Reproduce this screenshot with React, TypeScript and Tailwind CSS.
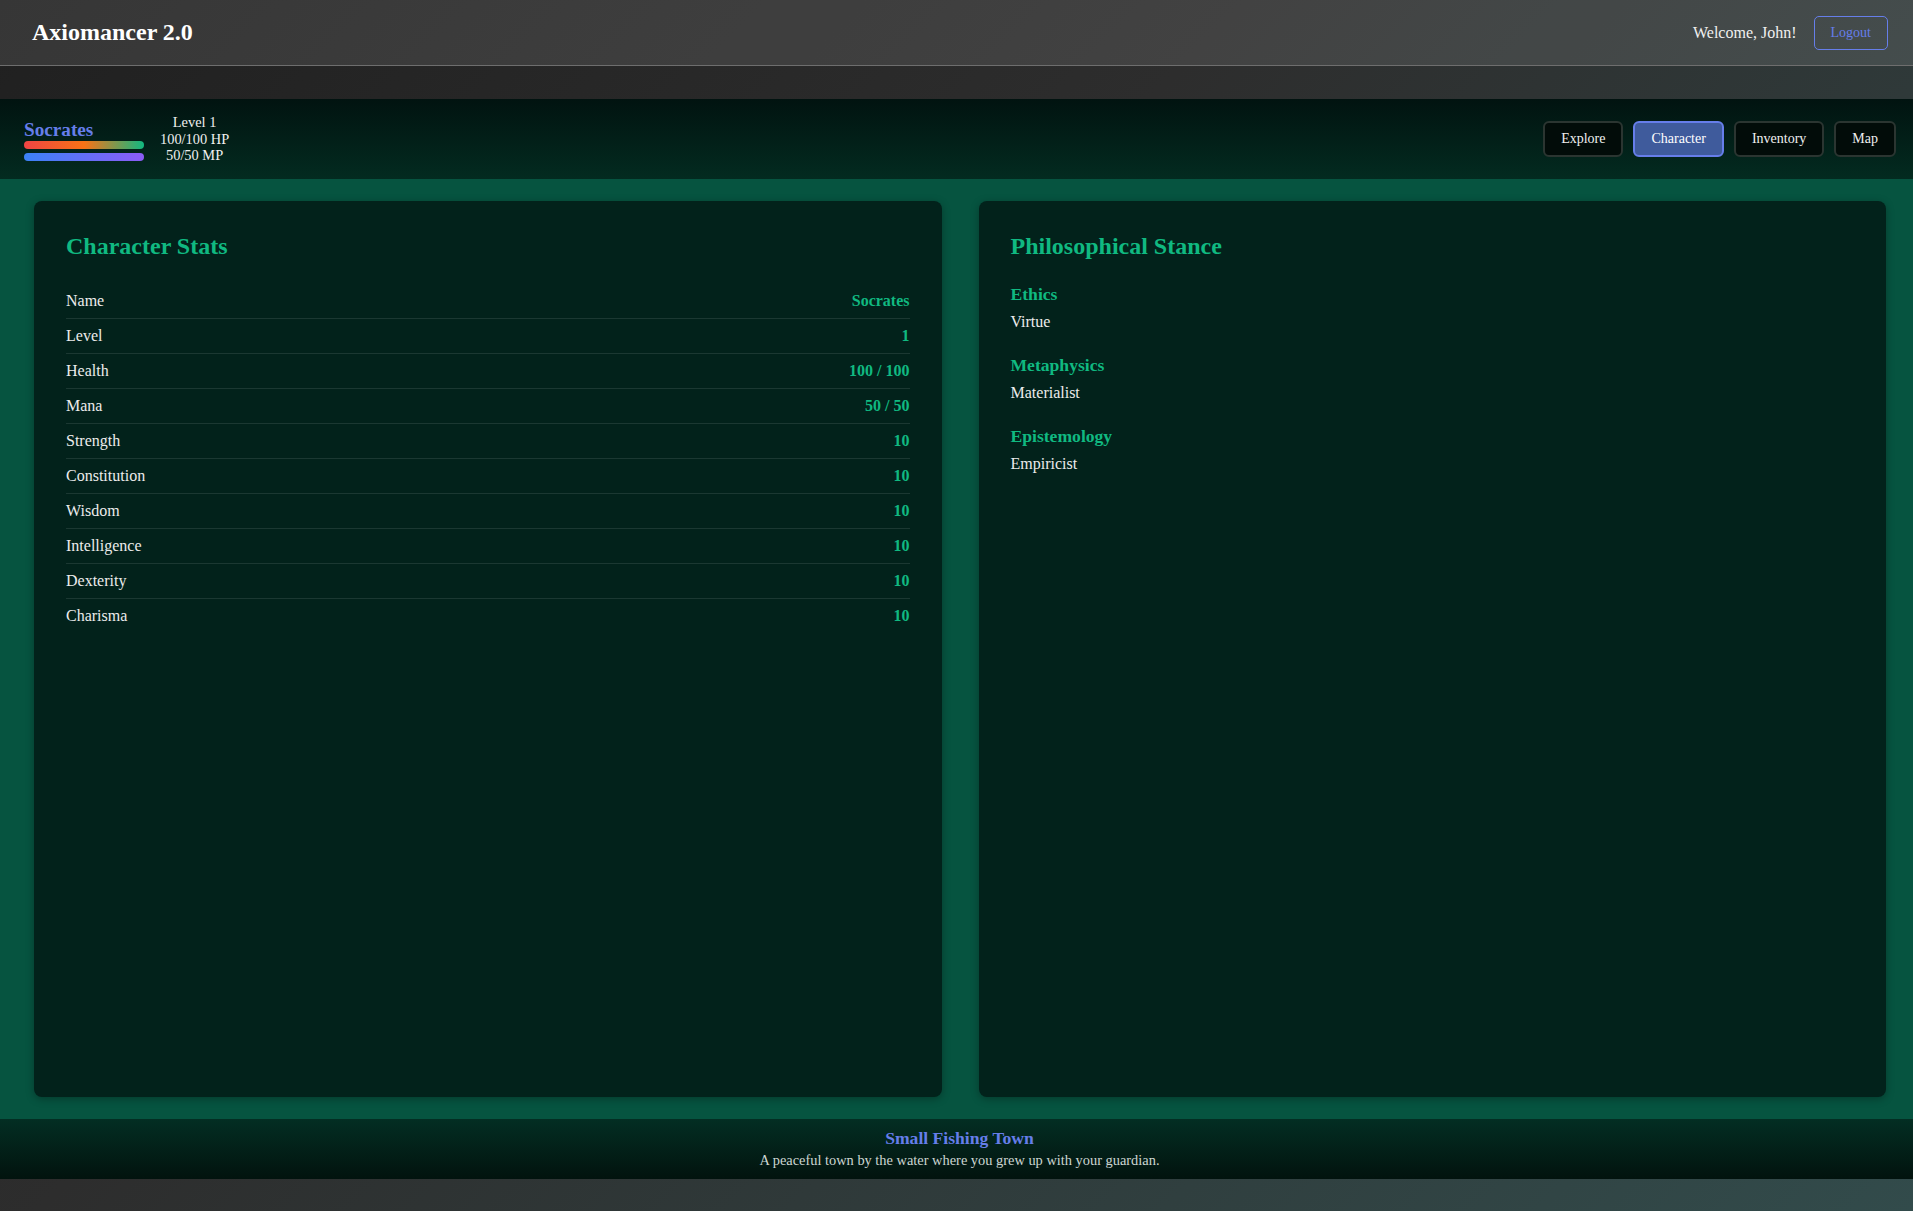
import React from "react";

type Stat = { label: string; value: string };

const stats: Stat[] = [
  { label: "Name", value: "Socrates" },
  { label: "Level", value: "1" },
  { label: "Health", value: "100 / 100" },
  { label: "Mana", value: "50 / 50" },
  { label: "Strength", value: "10" },
  { label: "Constitution", value: "10" },
  { label: "Wisdom", value: "10" },
  { label: "Intelligence", value: "10" },
  { label: "Dexterity", value: "10" },
  { label: "Charisma", value: "10" },
];

const stance = [
  { title: "Ethics", value: "Virtue" },
  { title: "Metaphysics", value: "Materialist" },
  { title: "Epistemology", value: "Empiricist" },
];

const navItems = ["Explore", "Character", "Inventory", "Map"];

export default function App() {
  const active = "Character";

  return (
    <div className="flex h-screen flex-col bg-[linear-gradient(135deg,#202020_0%,#2d2d2d_40%,#324b4b_100%)] font-['Liberation_Serif',serif] leading-[normal] text-[#e8e8e8]">
      {/* Header */}
      <header className="flex h-[66px] shrink-0 items-center justify-between border-b border-[#6e6e6e] bg-white/10 pl-8 pr-[25px]">
        <h1 className="text-[24px] font-bold text-white">Axiomancer 2.0</h1>
        <div className="flex items-center gap-[17px]">
          <span className="text-[16px] text-[#f0f0f0]">Welcome, John!</span>
          <button className="rounded-[5px] border border-[#667eea] px-4 py-2 text-[14px] text-[#667eea]">Logout</button>
        </div>
      </header>

      {/* Game */}
      <div className="mt-[33px] mb-[32px] flex flex-1 flex-col">
        {/* Character bar */}
        <div className="flex h-[80px] shrink-0 items-center justify-between bg-[linear-gradient(to_bottom,#011310,#032b20)] pl-6 pr-[17px]">
          <div className="flex items-center gap-4">
            <div className="flex w-[120px] flex-col">
              <span className="text-[19.2px] font-bold leading-[23px] text-[#667eea]">Socrates</span>
              <div className="h-2 w-[120px] rounded-full bg-[linear-gradient(to_right,#ef4444,#f97316_50%,#10b981)]" />
              <div className="mt-1 h-2 w-[120px] rounded-full bg-[linear-gradient(to_right,#3b82f6,#8b5cf6)]" />
            </div>
            <div className="flex flex-col items-center text-[14.4px] leading-[16.6px] text-[#f0f0f0]">
              <span>Level 1</span>
              <span>100/100 HP</span>
              <span>50/50 MP</span>
            </div>
          </div>
          <nav className="flex items-center gap-[10px]">
            {navItems.map((item) =>
              item === active ? (
                <button
                  key={item}
                  className="rounded-md border-2 border-[#667eea] bg-[#3f5b9c] px-4 py-2 text-[14px] text-white"
                >
                  {item}
                </button>
              ) : (
                <button
                  key={item}
                  className="rounded-md border-2 border-[#2b3531] bg-[#020c09] px-4 py-2 text-[14px] text-[#f0f0f0]"
                >
                  {item}
                </button>
              )
            )}
          </nav>
        </div>

        {/* Main */}
        <main className="grid flex-1 grid-cols-2 gap-[37px] bg-[#065440] pt-[22px] pb-[22px] pl-[34px] pr-[27px]">
          {/* Character Stats */}
          <section className="rounded-lg bg-[#02221b] p-8 shadow-[0_2px_8px_rgba(0,0,0,0.3)]">
            <h2 className="mb-6 text-[24px] font-bold text-[#10b981]">Character Stats</h2>
            <div className="flex flex-col">
              {stats.map((s, i) => (
                <div
                  key={s.label}
                  className={
                    i < stats.length - 1
                      ? "flex items-center justify-between border-b border-white/10 py-2"
                      : "flex items-center justify-between py-2"
                  }
                >
                  <span className="text-[16px] text-[#ececec]">{s.label}</span>
                  <span className="text-[16px] font-bold text-[#10b981]">{s.value}</span>
                </div>
              ))}
            </div>
          </section>

          {/* Philosophical Stance */}
          <section className="rounded-lg bg-[#02221b] p-8 shadow-[0_2px_8px_rgba(0,0,0,0.3)]">
            <h2 className="mb-6 text-[24px] font-bold text-[#10b981]">Philosophical Stance</h2>
            {stance.map((s) => (
              <div key={s.title} className="mb-6">
                <h3 className="mb-2 text-[17.6px] font-bold text-[#10b981]">{s.title}</h3>
                <p className="text-[16px] text-[#ececec]">{s.value}</p>
              </div>
            ))}
          </section>
        </main>

        {/* Location footer */}
        <footer className="flex h-[60px] shrink-0 flex-col items-center bg-[linear-gradient(to_bottom,#032e23,#02130e)] pt-[9px] pl-[6px]">
          <span className="mb-[3px] text-[17.6px] font-bold text-[#667eea]">Small Fishing Town</span>
          <span className="text-[14.4px] text-[#cdd6d2]">A peaceful town by the water where you grew up with your guardian.</span>
        </footer>
      </div>
    </div>
  );
}
